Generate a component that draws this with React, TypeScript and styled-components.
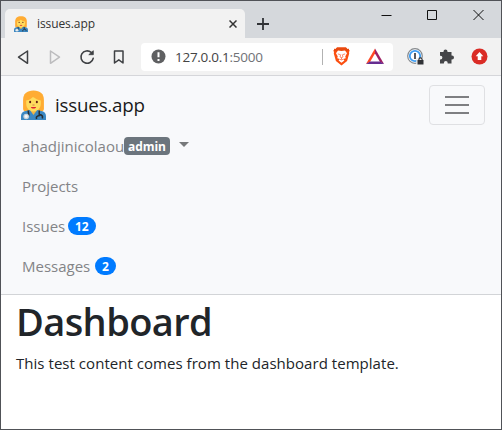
import React from "react";
import styled, { createGlobalStyle } from "styled-components";

const GlobalStyle = createGlobalStyle`
  *, *::before, *::after { box-sizing: border-box; }
  body { margin: 0; overflow: hidden; }
  h1, p, ul { margin: 0; padding: 0; }
  svg { display: block; flex: none; }
  button { font: inherit; background: none; padding: 0; border: 0; }
`;

const Window = styled.div`
  width: 502px;
  height: 430px;
  display: flex;
  flex-direction: column;
  border: 1px solid #505257;
  background: #fff;
  color: #212529;
  font-family: "Open Sans", "Noto Sans", sans-serif;
`;

const TabStrip = styled.div`
  height: 37px;
  flex: none;
  display: flex;
  background: #d5d8dc;
  padding-left: 4px;
`;

const Tab = styled.div`
  width: 240px;
  height: 29px;
  margin-top: 8px;
  padding: 0 8px 0 9px;
  display: flex;
  align-items: center;
  border-radius: 5px 5px 0 0;
  background: #f2f2f2;
`;

const TabTitle = styled.span`
  flex: 1;
  margin-left: 9px;
  font-size: 12px;
  line-height: 16px;
  letter-spacing: -0.09px;
  color: #333;
`;

const NewTab = styled.button`
  width: 12px;
  height: 12px;
  margin: 17px 0 0 12px;
`;

const WindowControls = styled.div`
  display: flex;
  gap: 35px;
  margin: 8px 17px 0 auto;
`;

const Toolbar = styled.div`
  height: 38px;
  flex: none;
  display: flex;
  align-items: center;
  padding: 0 13px 0 14px;
  background: #f2f2f2;
  border-bottom: 1px solid #d5d6da;
`;

const NavButtons = styled.div`
  display: flex;
  gap: 16px;
`;

const AddressBar = styled.div`
  width: 252px;
  height: 28px;
  margin-left: 14px;
  padding: 0 9px 0 10px;
  display: flex;
  align-items: center;
  border-radius: 4px;
  background: #fff;
`;

const Url = styled.span`
  flex: 1;
  margin-left: 9px;
  font-size: 13.5px;
  line-height: 20px;
  letter-spacing: -0.27px;
  color: #444;
  span { color: #707276; }
`;

const Divider = styled.span`
  width: 1px;
  height: 16px;
  background: #b2b2b2;
  margin-right: 10px;
`;

const Shields = styled.div`
  display: flex;
  align-items: center;
  gap: 16px;
`;

const Extensions = styled.div`
  display: flex;
  align-items: center;
  gap: 15px;
  margin-left: auto;
`;

const Navbar = styled.nav`
  height: 219px;
  flex: none;
  padding: 8px 16px 0 21px;
  background: #f8f9fb;
  border-bottom: 1px solid #d2d4d7;
`;

const NavHeader = styled.div`
  display: flex;
  align-items: center;
  height: 42px;
`;

const Brand = styled.div`
  display: flex;
  align-items: center;
  gap: 9px;
  margin-left: -1px;
  font-size: 18.75px;
  line-height: 30px;
  letter-spacing: -0.2px;
  color: #1a1a1a;
`;

const Toggler = styled.button`
  width: 56px;
  height: 40px;
  margin-left: auto;
  display: flex;
  align-items: center;
  justify-content: center;
  border: 1px solid #dfe0e3;
  border-radius: 4px;
`;

const NavList = styled.ul`
  list-style: none;
`;

const NavItem = styled.li`
  height: 40px;
  display: flex;
  align-items: center;
  font-size: 15px;
  color: #838487;
`;

const Label = styled.span<{ $width: number }>`
  width: ${(p) => p.$width}px;
  line-height: 24px;
  white-space: nowrap;
`;

const Badge = styled.span<{ $pill?: boolean }>`
  height: 18px;
  padding: ${(p) => (p.$pill ? "0 7px" : "0 4px")};
  margin-left: ${(p) => (p.$pill ? "4px" : "0")};
  border-radius: ${(p) => (p.$pill ? "9px" : "4px")};
  background: ${(p) => (p.$pill ? "#007bff" : "#6c757d")};
  color: #fff;
  font-size: 12px;
  font-weight: 700;
  line-height: 19px;
  letter-spacing: -0.05px;
`;

const Caret = styled.span`
  margin: -3px 0 0 9px;
  border: 5px solid transparent;
  border-top-color: #77797b;
  border-bottom: 0;
`;

const Main = styled.main`
  padding: 2px 15px;
`;

const Title = styled.h1`
  font-size: 38px;
  font-weight: 600;
  line-height: 48px;
  letter-spacing: -0.6px;
`;

const Body = styled.p`
  margin-top: 6px;
  font-size: 15px;
  line-height: 24px;
  letter-spacing: 0.04px;
  white-space: nowrap;
`;

const HealthWorker = ({ width, height }: { width: number; height: number }) => (
  <svg width={width} height={height} viewBox="0 0 24 30" preserveAspectRatio="none">
    <path d="M2 19V10C2 4 5.500.5 12 .5S22 4 22 10v9c0 2-2 3-4 3H6c-2 0-4-1-4-3z" fill="#ffac33" />
    <path d="M8.500 17h7v6l-3.500 4-3.500-4z" fill="#efb446" />
    <path d="M5 10.500c3-.5 5-2 6.500-3.500 2 1.500 5 3 7.500 3.500v3c0 4.500-3 8-7 8s-7-3.500-7-8z" fill="#ffdc5d" />
    <ellipse cx="8.800" cy="12" rx="1" ry="1.300" fill="#662113" />
    <ellipse cx="15.200" cy="12" rx="1" ry="1.300" fill="#662113" />
    <path d="M11 15h2" stroke="#c1694f" strokeWidth=".8" />
    <path d="M9.500 17h5c-.5 2-4.500 2-5 0z" fill="#df1f32" />
    <path d="M0 30v-4c0-3 2-4.500 4.500-5L8.500 20l3.500 5 3.500-5 4 1c2.500.5 4.500 2 4.500 5v4z" fill="#3b88c3" />
    <path d="M7 20.500c0 5 2 5-2 6M17.500 20.500v5c-3 .5-3 2-2.500 3.500M17.500 24.500c3 .5 3.500 1.500 3 4" fill="none" stroke="#292f33" strokeWidth="1.500" />
    <circle cx="5" cy="26.500" r="2.700" fill="#ccd6dd" />
    <circle cx="5" cy="26.500" r="1.400" fill="#f5f8fa" />
  </svg>
);

const WindowIcon = ({ d }: { d: string }) => (
  <svg width="11" height="12" viewBox="0 0 11 12">
    <path d={d} fill="none" stroke="#111" strokeWidth="1" />
  </svg>
);

const ToolIcon = ({ d, color = "#3f4144" }: { d: string; color?: string }) => (
  <svg width="16" height="16" viewBox="0 0 16 16">
    <path d={d} fill="none" stroke={color} strokeWidth="1.500" strokeLinejoin="round" strokeLinecap="round" />
  </svg>
);

const InfoIcon = () => (
  <svg width="15" height="15" viewBox="0 0 15 15">
    <circle cx="7.500" cy="7.500" r="7" fill="#5f6062" />
    <path d="M7.500 3.200v5M7.500 9.900v2" stroke="#fff" strokeWidth="2" />
  </svg>
);

const ReloadIcon = () => (
  <svg width="16" height="16" viewBox="0 0 16 16">
    <path d="M12.200 3.400A6.200 6.200 0 1 0 14.200 9.300" fill="none" stroke="#3f4144" strokeWidth="1.600" strokeLinecap="round" />
    <path d="M9.800 5.700l4.500-4v4z" fill="#3f4144" stroke="#3f4144" strokeWidth=".8" strokeLinejoin="round" />
  </svg>
);

const BraveIcon = () => (
  <svg width="17" height="19" viewBox="0 0 17 19">
    <path d="M4 .5h9L14.300 2l1.200-.2 1 2.200-.5 1 .2 1.500-2.100 7.500-5.600 4.500L2.900 14 .8 6.500 1 5 .5 4l1-2.200L2.700 2z" fill="#fb4f10" />
    <path d="M4 .5h9L14.300 2l1.200-.2 1 2.200H.5l1-2.200L2.700 2z" fill="#e8490f" />
    <path d="M5 3.500l3.500.6 3.500-.6 2 2.700-1.700 3 .4 2-2.500.9 1.200 1.500-2.900 2.200-2.900-2.200 1.200-1.500-2.500-.9.400-2-1.700-3z" fill="#fff" />
    <path d="M4.800 6.900l2.400.7M12.200 6.900l-2.400.7M7.700 7.500l-.7 2.400 1.500.8 1.500-.8-.7-2.400M8.500 10.500v2M6.800 12.300l1.700.6 1.700-.6" fill="none" stroke="#fb542b" strokeWidth=".7" />
  </svg>
);

const TriangleIcon = () => (
  <svg width="18" height="17" viewBox="0 0 18 17">
    <path d="M9 .5L0 16l4-2 5-8.500z" fill="#ff4724" />
    <path d="M9 .5V5.500l5 8.500 4 2z" fill="#9e1f63" />
    <path d="M0 16l4-2.500h10l4 2.500z" fill="#662d91" />
  </svg>
);

const PasswordIcon = () => (
  <svg width="17" height="17" viewBox="0 0 17 17">
    <circle cx="8" cy="8" r="7.300" fill="#fff" stroke="#85898d" strokeWidth="1.200" />
    <circle cx="8" cy="8" r="5.200" fill="#fff" stroke="#3d9df3" strokeWidth="1.800" />
    <path d="M8 5v6" stroke="#44484d" strokeWidth="1.800" />
    <path d="M9.300 10h7.200v7H9.300z" fill="#f2f2f2" />
    <path d="M10.500 12h6v4.500h-6z" fill="#303236" />
    <path d="M11.900 12.500v-1a1.600 1.600 0 0 1 3.200 0v1" fill="none" stroke="#303236" strokeWidth="1.200" />
  </svg>
);

const PuzzleIcon = () => (
  <svg width="17" height="17" viewBox="0 0 17 17">
    <path d="M1 4h3.500v-.5a2 2 0 0 1 4 0V4h4v3.500h.5a2 2 0 0 1 0 4h-.5V15.500h-3.800V15a1.900 1.900 0 0 0-3.800 0v.5H1v-4h.5a1.900 1.900 0 0 0 0-3.800H1z" fill="#454649" />
  </svg>
);

const UploadIcon = () => (
  <svg width="17" height="17" viewBox="0 0 17 17">
    <circle cx="8.500" cy="8.500" r="8" fill="#da2c26" />
    <path d="M8.500 4L4.700 8.200h2V12h3.600V8.200h2z" fill="#fff" />
  </svg>
);

const links = [
  { text: "Projects", width: 56 },
  { text: "Issues", width: 42, count: 12 },
  { text: "Messages", width: 69, count: 2 },
];

export default function App() {
  return (
    <>
      <GlobalStyle />
      <Window>
        <TabStrip>
          <Tab>
            <HealthWorker width={14} height={16} />
            <TabTitle>issues.app</TabTitle>
            <svg width="8" height="8" viewBox="0 0 8 8">
              <path d="M.5.5l7 7m0-7l-7 7" stroke="#333" strokeWidth="1.500" />
            </svg>
          </Tab>
          <NewTab aria-label="New tab">
            <svg width="12" height="12" viewBox="0 0 12 12">
              <path d="M6 0v12M0 6h12" stroke="#303236" strokeWidth="1.800" />
            </svg>
          </NewTab>
          <WindowControls>
            <WindowIcon d="M.5 6.500h10" />
            <WindowIcon d="M.5 1.500h9v9H.5z" />
            <WindowIcon d="M.5 1l10 10m0-10l-10 10" />
          </WindowControls>
        </TabStrip>
        <Toolbar>
          <NavButtons>
            <ToolIcon d="M12.500 2v12.300L3.500 8.100z" />
            <ToolIcon d="M3.500 2v12.300L12.500 8.100z" color="#bcbcbe" />
            <ReloadIcon />
            <ToolIcon d="M3.500 2h8.500v12L7.800 10.800 3.500 14z" />
          </NavButtons>
          <AddressBar>
            <InfoIcon />
            <Url>127.0.0.1<span>:5000</span></Url>
            <Divider />
            <Shields>
              <BraveIcon />
              <TriangleIcon />
            </Shields>
          </AddressBar>
          <Extensions>
            <PasswordIcon />
            <PuzzleIcon />
            <UploadIcon />
          </Extensions>
        </Toolbar>
        <Navbar>
          <NavHeader>
            <Brand>
              <HealthWorker width={25} height={30} />
              issues.app
            </Brand>
            <Toggler aria-label="Toggle navigation">
              <svg width="24" height="18" viewBox="0 0 24 18">
                <path d="M0 1h24M0 9h24M0 17h24" stroke="#7e7f82" strokeWidth="2" />
              </svg>
            </Toggler>
          </NavHeader>
          <NavList>
            <NavItem>
              <Label $width={102}>ahadjinicolaou</Label>
              <Badge>admin</Badge>
              <Caret />
            </NavItem>
            {links.map(({ text, width, count }) => (
              <NavItem key={text}>
                <Label $width={width}>{text}</Label>
                {count && <Badge $pill>{count}</Badge>}
              </NavItem>
            ))}
          </NavList>
        </Navbar>
        <Main>
          <Title>Dashboard</Title>
          <Body>This test content comes from the dashboard template.</Body>
        </Main>
      </Window>
    </>
  );
}
